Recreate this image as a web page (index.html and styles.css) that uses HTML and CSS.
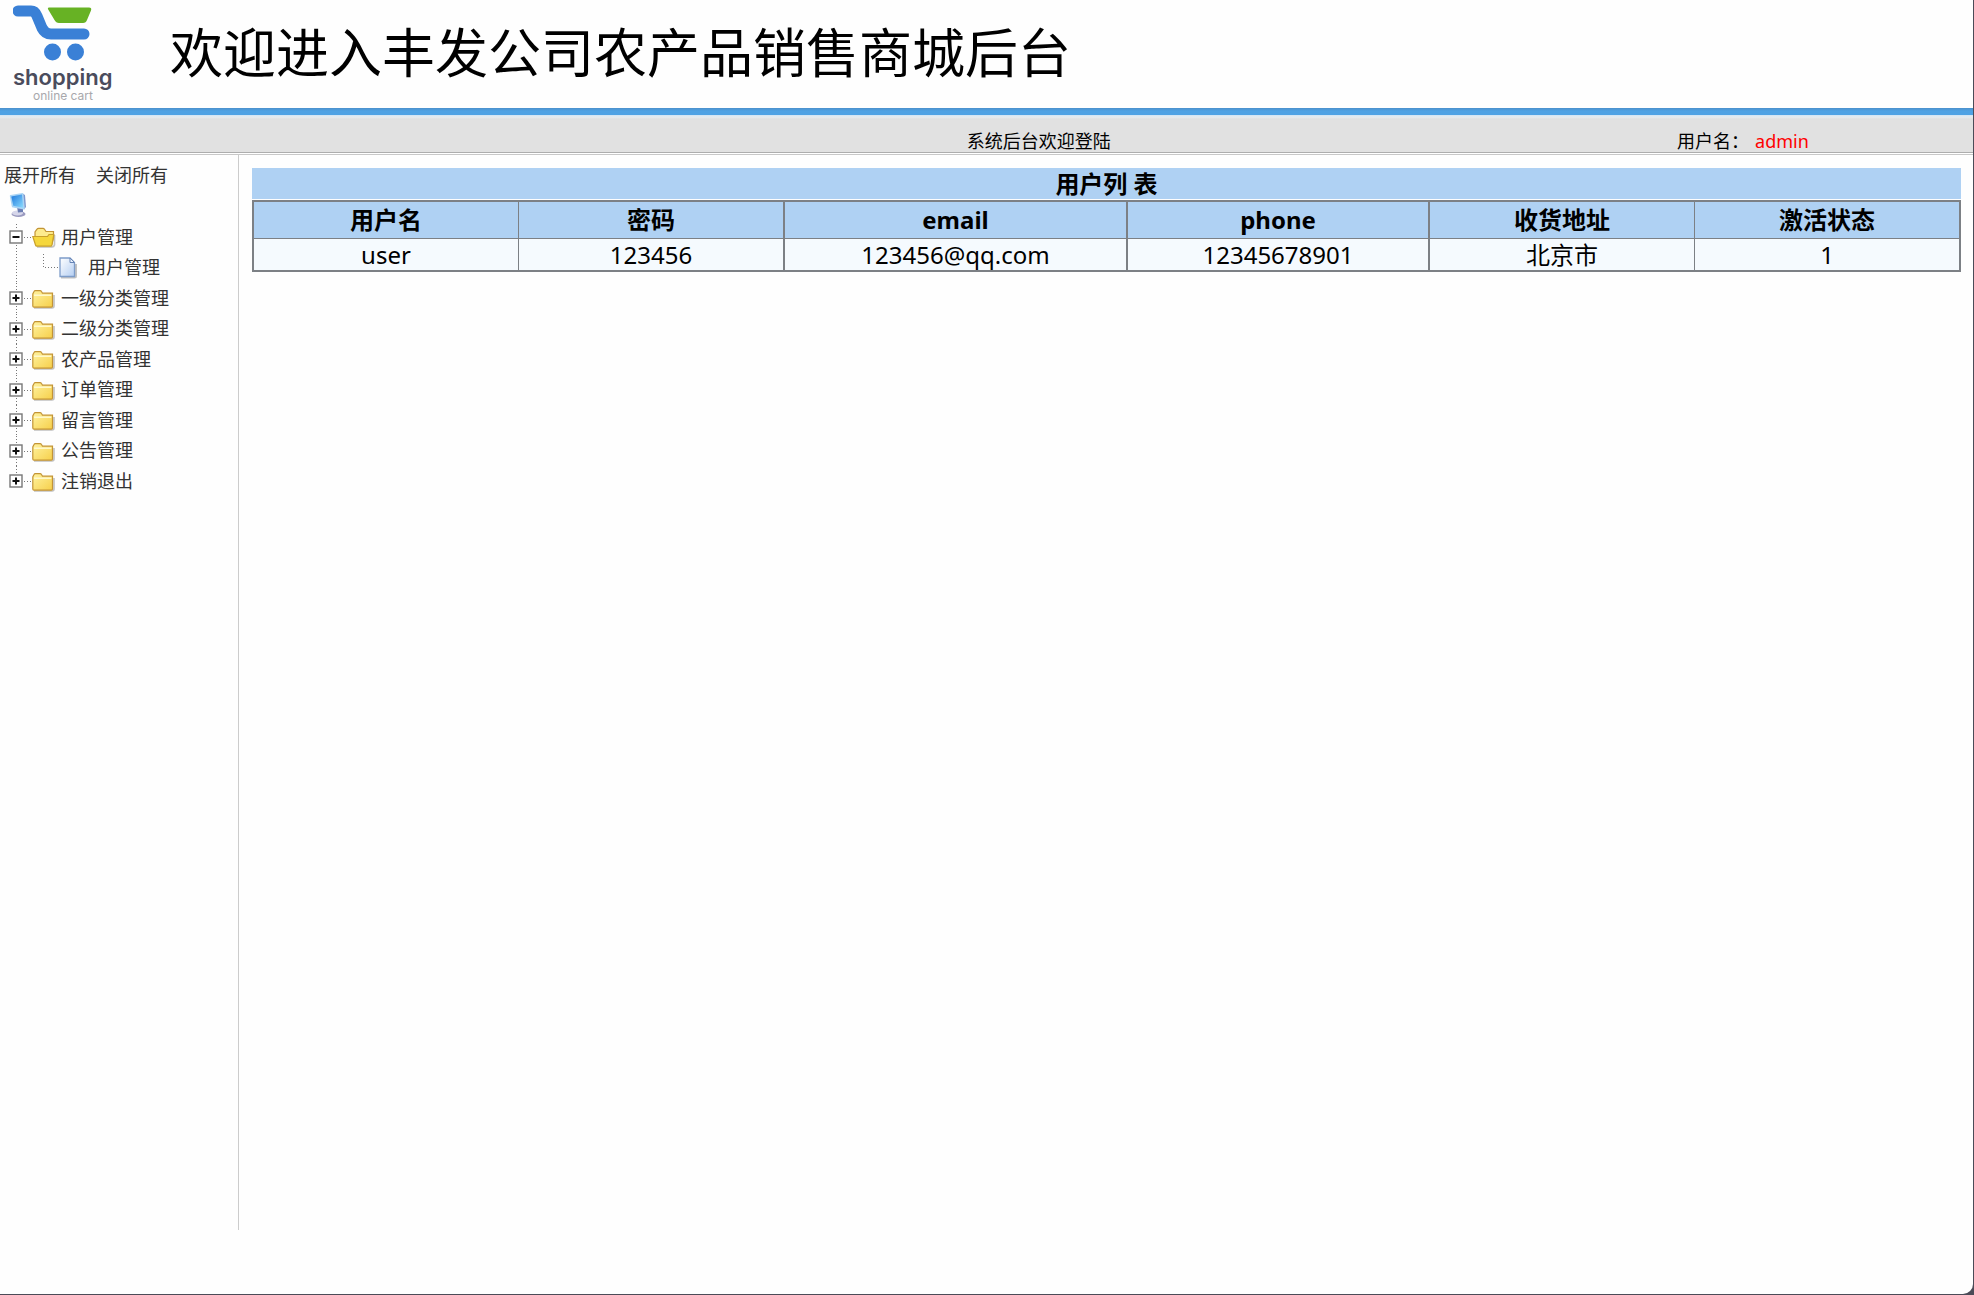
FILE: index.html
```html
<!DOCTYPE html>
<html lang="zh-CN">
<head>
    <meta charset="UTF-8">
    <title>后台管理</title>
    <link rel="stylesheet" href="styles.css">
</head>
<body>

<!-- 图标 -->
<svg class="hide">
    <defs>
        <linearGradient id="g_folder" x1="0" y1="0" x2="1" y2="1">
            <stop offset="0" stop-color="#fff3a0"/>
            <stop offset="1" stop-color="#f6cf4a"/>
        </linearGradient>
        <linearGradient id="g_page" x1="0" y1="0" x2="1" y2="1">
            <stop offset="0" stop-color="#ffffff"/>
            <stop offset="1" stop-color="#b4cef2"/>
        </linearGradient>
        <linearGradient id="g_screen" x1="0" y1="0" x2="1" y2="1">
            <stop offset="0" stop-color="#1f78dc"/>
            <stop offset="1" stop-color="#8bdcff"/>
        </linearGradient>
    </defs>
    <symbol id="joint_plus" viewBox="0 0 27 30">
        <path d="M11.5 0V8M11.5 23V30M19 15.5H27" stroke="#777" stroke-dasharray="1 2" fill="none"/>
        <rect x="5" y="9" width="12" height="12" fill="#fff" stroke="#777" stroke-width="1.4"/>
        <path d="M7.5 15H14.5M11 11.5V18.5" stroke="#111" stroke-width="2"/>
    </symbol>
    <symbol id="joint_minus" viewBox="0 0 27 30">
        <path d="M11.5 2V8M11.5 23V30M19 15.5H27" stroke="#777" stroke-dasharray="1 2" fill="none"/>
        <rect x="5" y="9" width="12" height="12" fill="#fff" stroke="#777" stroke-width="1.4"/>
        <path d="M7.5 15H14.5" stroke="#111" stroke-width="2"/>
    </symbol>
    <symbol id="joint_end" viewBox="0 0 27 30">
        <path d="M11.5 0V8M19 15.5H27" stroke="#777" stroke-dasharray="1 2" fill="none"/>
        <rect x="5" y="9" width="12" height="12" fill="#fff" stroke="#777" stroke-width="1.4"/>
        <path d="M7.5 15H14.5M11 11.5V18.5" stroke="#111" stroke-width="2"/>
    </symbol>
    <symbol id="joint_line" viewBox="0 0 27 30">
        <path d="M11.5 1V29" stroke="#777" stroke-dasharray="1 2" fill="none"/>
    </symbol>
    <symbol id="joint_child" viewBox="0 0 27 30">
        <path d="M11.5 1V14.5H27" stroke="#777" stroke-dasharray="1 2" fill="none"/>
    </symbol>
    <symbol id="folder" viewBox="0 0 24 22">
        <path d="M2 21H20Q22 21 22 19V8" stroke="#999" stroke-opacity=".6" stroke-width="1.6" fill="none"/>
        <path d="M.8 19V7L2 4.500Q2.400 3.600 3.400 3.600H8Q9 3.600 9.500 4.500L10.500 6.200H20.500V19Q20.500 20.200 19.300 20.200H2Q.8 20.200 .8 19Z" fill="url(#g_folder)" stroke="#c39435" stroke-width="1.2"/>
        <path d="M2 8.200H19.300" stroke="#fffbd5" stroke-width="1.4"/>
    </symbol>
    <symbol id="folder_open" viewBox="0 0 24 22">
        <path d="M5 21H20Q22 21 22.500 19V9" stroke="#999" stroke-opacity=".6" stroke-width="1.6" fill="none"/>
        <path d="M3 11V6L5 3.200Q5.500 2.400 6.500 2.400H11Q12 2.400 12.500 3.200L14 5.500H21.500V12L19.500 19H6Z" fill="#fdeb8d" stroke="#c39435" stroke-width="1.2"/>
        <path d="M.8 10.500H15.500L17 8.500H21.800L20 18.800Q19.800 20.200 18.500 20.200H5Q3.800 20.200 3.500 19Z" fill="#f5d73c" stroke="#c8a02c" stroke-width="1.2"/>
    </symbol>
    <symbol id="page" viewBox="0 0 24 22">
        <path d="M2 20.500H15.500Q17 20.500 17 19V7" stroke="#999" stroke-opacity=".6" stroke-width="2" fill="none"/>
        <path d="M1 1H11L15.500 5.500V19.500H1Z" fill="url(#g_page)" stroke="#7d9cc9" stroke-width="1.3"/>
        <path d="M11 1V5.500H15.500Z" fill="#e6f0fd" stroke="#6684b5"/>
    </symbol>
    <symbol id="computer" viewBox="0 0 18 26">
        <ellipse cx="9.500" cy="22" rx="7" ry="3" fill="#9a9abf"/>
        <ellipse cx="8.500" cy="21" rx="5.500" ry="2.500" fill="#d6d6ea"/>
        <path d="M8 15L14 15V20L9 20.500Z" fill="#6b7db2"/>
        <path d="M13.500 1.500L16 3L17 15L15 17.500Z" fill="#7f97cc"/>
        <path d="M.8 4Q.8 3.300 1.500 3.100L13.500 1Q14.300 1 14.400 1.800L15.800 16.500Q15.800 17.600 14.800 17.500L4 15.400Q3 15.200 2.800 14.400Z" fill="#a9d4f5"/>
        <path d="M2.300 4.500L13 2.600L14.200 15.800L4.300 13.800Z" fill="url(#g_screen)"/>
    </symbol>
</svg>

<div class="page">
    <div class="header">
        <div class="logo">
            <svg class="logo_cart" viewBox="0 0 80 58" width="80" height="58">
                <path d="M5 7H18Q22 7 24 12L29 24Q32 30 38 30H71" fill="none" stroke="#3a80d6" stroke-width="11" stroke-linecap="round" stroke-linejoin="round"/>
                <path d="M36 3.500H76Q79 3.500 78 6.500L74 16Q73 19 70 19H46Q43 19 41.500 16L35.500 6Q34 3.500 36 3.500Z" fill="#67b224"/>
                <circle cx="39.500" cy="48" r="8.500" fill="#3a80d6"/>
                <circle cx="62.500" cy="48" r="8.500" fill="#3a80d6"/>
            </svg>
            <div class="logo_name">shopping</div>
            <div class="logo_sub">online cart</div>
        </div>
        <h1>欢迎进入丰发公司农产品销售商城后台</h1>
    </div>
    <div class="topbar">
        <div class="topbar_welcome">系统后台欢迎登陆</div>
        <div class="topbar_user">用户名：<span class="topbar_name">admin</span></div>
    </div>
    <div class="main">
        <div class="sidebar">
            <div class="sidebar_ctrl">
                <a href="#">展开所有</a>
                <a href="#">关闭所有</a>
            </div>
            <div class="tree_root"><svg class="computer"><use href="#computer"/></svg></div>
            <ul class="tree">
                <li><button type="button" class="joint" aria-label="收起"><svg><use href="#joint_minus"/></svg></button><svg class="icon"><use href="#folder_open"/></svg><a href="#">用户管理</a></li>
                <li><svg class="joint"><use href="#joint_line"/></svg><svg class="joint"><use href="#joint_child"/></svg><svg class="icon"><use href="#page"/></svg><a href="#">用户管理</a></li>
                <li><button type="button" class="joint" aria-label="展开"><svg><use href="#joint_plus"/></svg></button><svg class="icon"><use href="#folder"/></svg><a href="#">一级分类管理</a></li>
                <li><button type="button" class="joint" aria-label="展开"><svg><use href="#joint_plus"/></svg></button><svg class="icon"><use href="#folder"/></svg><a href="#">二级分类管理</a></li>
                <li><button type="button" class="joint" aria-label="展开"><svg><use href="#joint_plus"/></svg></button><svg class="icon"><use href="#folder"/></svg><a href="#">农产品管理</a></li>
                <li><button type="button" class="joint" aria-label="展开"><svg><use href="#joint_plus"/></svg></button><svg class="icon"><use href="#folder"/></svg><a href="#">订单管理</a></li>
                <li><button type="button" class="joint" aria-label="展开"><svg><use href="#joint_plus"/></svg></button><svg class="icon"><use href="#folder"/></svg><a href="#">留言管理</a></li>
                <li><button type="button" class="joint" aria-label="展开"><svg><use href="#joint_plus"/></svg></button><svg class="icon"><use href="#folder"/></svg><a href="#">公告管理</a></li>
                <li><button type="button" class="joint" aria-label="展开"><svg><use href="#joint_end"/></svg></button><svg class="icon"><use href="#folder"/></svg><a href="#">注销退出</a></li>
            </ul>
        </div>
        <div class="content">
            <table class="list">
                <caption>用户列 表</caption>
                <colgroup>
                    <col>
                    <col>
                    <col class="col_email">
                    <col class="col_phone">
                    <col>
                    <col>
                </colgroup>
                <thead>
                    <tr>
                        <th>用户名</th>
                        <th>密码</th>
                        <th>email</th>
                        <th>phone</th>
                        <th>收货地址</th>
                        <th>激活状态</th>
                    </tr>
                </thead>
                <tbody>
                    <tr>
                        <td>user</td>
                        <td>123456</td>
                        <td>123456@qq.com</td>
                        <td>12345678901</td>
                        <td>北京市</td>
                        <td>1</td>
                    </tr>
                </tbody>
            </table>
        </div>
    </div>
</div>
</body>
</html>
```
FILE: styles.css
```css
*{
    margin: 0;
    padding: 0;
    box-sizing: border-box;
}
body{
    background: #4b4b57;
    font-family: "Noto Sans", "Noto Sans CJK SC", sans-serif;
    font-size: 18px;
    color: #000;
}
.hide{
    position: absolute;
    width: 0;
    height: 0;
}
.page{
    display: flex;
    flex-direction: column;
    min-height: calc(100vh - 1px);
    margin: 0 1px 1px 0;
    background: #fefefe;
    border-bottom-right-radius: 10px;
}

/* 头部 */
.header{
    display: flex;
    height: 108px;
}
.logo{
    width: 126px;
    height: 108px;
    padding: 4px 0 0 13px;
    font-family: Inter, sans-serif;
}
.logo_cart{
    display: block;
}
.logo_name{
    width: 100px;
    font-size: 22px;
    line-height: 30px;
    font-weight: 600;
    color: #4a4c5c;
}
.logo_sub{
    width: 100px;
    font-size: 12px;
    line-height: 8px;
    text-align: center;
    color: #a8a8ac;
}
.header h1{
    margin-left: 44px;
    font-size: 53px;
    line-height: 106px;
    font-weight: normal;
    white-space: nowrap;
}
.topbar{
    display: grid;
    grid-template-columns: 49% 36% 15%;
    height: 47px;
    padding-top: 20px;
    line-height: 26px;
    background: linear-gradient(#4b90cb 0, #4fa2e4 3px, #4fa2e4 7px, #cfe4f5 7px, #e6ecf0 9px, #e1e1e1 11px, #e1e1e1 44px, #adadad 44px, #adadad 45px, #fff 45px, #fff 46px, #c8c8c8 46px);
}
.topbar_welcome{
    grid-column: 2;
}
.topbar_user{
    grid-column: 3;
}
.topbar_name{
    margin-left: 6px;
    color: #f00;
}

/* 左侧菜单 */
.main{
    display: flex;
    flex: 1;
}
.sidebar{
    width: 239px;
    flex: none;
    margin-bottom: 64px;
    border-right: 1px solid #ccc;
}
.sidebar a{
    color: #333;
    text-decoration: none;
}
.sidebar_ctrl{
    display: flex;
    gap: 20px;
    height: 37px;
    padding: 4px 4px 0;
    line-height: 32px;
}
.tree_root{
    height: 30px;
    padding-left: 9px;
}
.computer{
    display: block;
    width: 18px;
    height: 26px;
}
.tree{
    display: grid;
    grid-auto-rows: 30px 31px;
    list-style: none;
}
.tree li{
    display: flex;
    align-items: center;
    padding-left: 5px;
}
.tree a{
    padding-bottom: 3px;
}
.joint{
    width: 27px;
    height: 30px;
    border: 0;
    background: none;
}
.joint svg{
    display: block;
    width: 27px;
    height: 30px;
}
.icon{
    width: 24px;
    height: 22px;
    margin-right: 5px;
}

/* 列表 */
.content{
    flex: 1;
    padding: 13px 12px 0 13px;
}
.list{
    width: 100%;
    table-layout: fixed;
    border-collapse: collapse;
    border: 2px solid #7c8085;
    background: #f5fafe;
    font-size: 24px;
    text-align: center;
}
.list caption{
    height: 31px;
    margin-bottom: 1px;
    line-height: 31px;
    font-weight: bold;
    background: #afd1f3;
}
.list th,
.list td{
    height: 33px;
    line-height: 31px;
    border: 1px solid #7c8085;
}
.list th{
    height: 37px;
    background: #afd1f3;
}
.list .col_email,
.list .col_phone{
    border-left: 2px solid #7c8085;
    border-right: 2px solid #7c8085;
}
.col_email{
    width: 343px;
}
.col_phone{
    width: 302px;
}
```
